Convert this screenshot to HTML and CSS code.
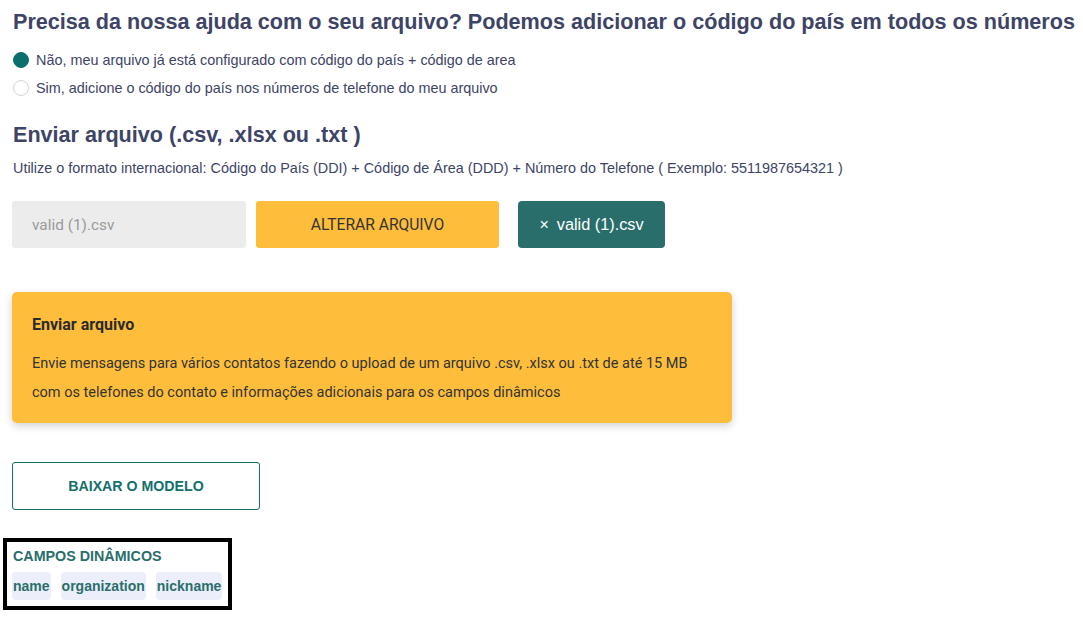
FILE: index.html
```html
<!DOCTYPE html>
<html lang="pt-BR">
<head>
<meta charset="utf-8">
<title>Enviar arquivo</title>
<link rel="stylesheet" href="styles.css">
</head>
<body>
<main class="page">
  <h1 class="title">Precisa da nossa ajuda com o seu arquivo? Podemos adicionar o código do país em todos os números</h1>
  <div class="radios">
    <label class="radio"><span class="dot dot-on"></span>Não, meu arquivo já está configurado com código do país + código de area</label>
    <label class="radio"><span class="dot"></span>Sim, adicione o código do país nos números de telefone do meu arquivo</label>
  </div>

  <h2 class="title title-2">Enviar arquivo (.csv, .xlsx ou .txt )</h2>
  <p class="hint">Utilize o formato internacional: Código do País (DDI) + Código de Área (DDD) + Número do Telefone ( Exemplo: 5511987654321 )</p>

  <div class="file-row">
    <div class="file-input">valid (1).csv</div>
    <button class="btn-yellow">ALTERAR ARQUIVO</button>
    <button class="btn-file"><span class="x">×</span>valid (1).csv</button>
  </div>

  <section class="card">
    <h3 class="card-title">Enviar arquivo</h3>
    <p class="card-text">Envie mensagens para vários contatos fazendo o upload de um arquivo .csv, .xlsx ou .txt de até 15 MB<br>com os telefones do contato e informações adicionais para os campos dinâmicos</p>
  </section>

  <button class="btn-outline">BAIXAR O MODELO</button>

  <div class="fields">
    <div class="fields-title">CAMPOS DINÂMICOS</div>
    <div class="chips">
      <span class="chip">name</span>
      <span class="chip">organization</span>
      <span class="chip">nickname</span>
    </div>
  </div>
</main>
</body>
</html>
```
FILE: styles.css
```css
* { box-sizing: border-box; }
html, body { margin: 0; padding: 0; background: #fff; }
body { font-family: "Liberation Sans", Arial, sans-serif; color: #3d4465; }

.page { padding: 8px 0 0 13px; display: flex; flex-direction: column; align-items: flex-start; }

.title { margin: 0; font-size: 21.6px; line-height: 28px; font-weight: bold; color: #3d4465; white-space: nowrap; }
.title-2 { margin-top: 19px; }

.radios { display: flex; flex-direction: column; margin-top: 10px; }
.radio { display: flex; align-items: center; height: 28px; font-size: 14.4px; color: #3d4465; }
.dot { width: 16px; height: 16px; border-radius: 50%; border: 1px solid #d6d6d6; margin-right: 7px; background: #fff; }
.dot-on { background: #0b6f6d; border-color: #0b6f6d; }

.hint { margin: 10px 0 0; font-size: 14.4px; line-height: 18px; color: #3d4465; white-space: nowrap; }

.file-row { display: flex; align-items: center; margin-top: 24px; margin-left: -1px; }
.file-input { width: 234px; height: 47px; background: #ececec; border-radius: 3px; padding-left: 20px; display: flex; align-items: center; font-family: Roboto, sans-serif; font-size: 15.4px; color: #9a9a9a; }
.btn-yellow { width: 243px; height: 47px; margin-left: 10px; border: 0; border-radius: 3px; background: #febe3c; font-family: Roboto, sans-serif; font-size: 15.6px; color: #333; }
.btn-file { width: 147px; height: 47px; margin-left: 19px; border: 0; border-radius: 4px; background: #2a6e6c; color: #fff; font-family: "Liberation Sans", Arial, sans-serif; font-size: 16.3px; display: flex; align-items: center; justify-content: center; padding: 0; }
.x { font-size: 16px; margin-right: 8px; }

.card { margin-top: 44px; margin-left: -1px; width: 720px; height: 131px; background: #febe3c; border-radius: 5px; box-shadow: 0 3px 8px rgba(0,0,0,0.18); padding: 22px 20px; color: #333; font-family: Roboto, sans-serif; }
.card-title { margin: 0; font-size: 16px; line-height: 22px; font-weight: bold; color: #2b2b2b; }
.card-text { margin: 13px 0 0; font-size: 14.5px; line-height: 29px; white-space: nowrap; }

.btn-outline { margin-top: 39px; margin-left: -1px; width: 248px; height: 48px; background: #fff; border: 1px solid #12706d; border-radius: 3px; color: #12706d; font-family: "Liberation Sans", Arial, sans-serif; font-weight: bold; font-size: 14.2px; }

.fields { margin-top: 28px; margin-left: -10px; width: 229px; border: 4px solid #000; padding: 6px 6px 6px 6px; }
.fields-title { font-size: 14.3px; font-weight: bold; color: #2a6e6c; line-height: 17px; }
.chips { display: flex; gap: 10px; margin-top: 7px; margin-left: -1px; }
.chip { background: #eceff9; border-radius: 4px; padding: 0 1px; height: 28px; display: flex; align-items: center; font-size: 14px; font-weight: bold; color: #2a6e6c; }
```
